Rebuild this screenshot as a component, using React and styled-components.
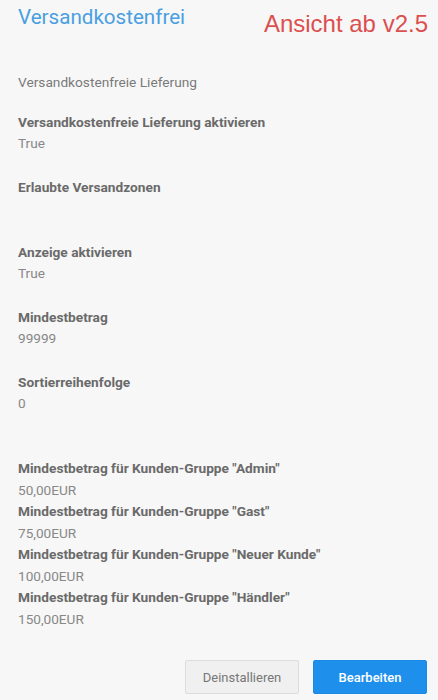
import React from "react";
import styled, { createGlobalStyle } from "styled-components";

const Global = createGlobalStyle`
  html, body { margin: 0; padding: 0; background: #f7f7f7; }
  body { font-family: Roboto, "Noto Sans", Arial, sans-serif; }
`;

const Page = styled.div`
  position: relative;
  width: 438px;
  height: 700px;
  box-sizing: border-box;
  padding: 0 0 0 18px;
  background: #f7f7f7;
  overflow: hidden;
`;

const Title = styled.h1`
  margin: 0;
  font-family: Roboto, Arial, sans-serif;
  font-weight: 400;
  font-size: 20.6px;
  line-height: 34px;
  color: #4a9fe0;
`;

const Annotation = styled.div`
  position: absolute;
  top: 9px;
  right: 10px;
  font-family: "Liberation Sans", Arial, sans-serif;
  font-size: 24px;
  line-height: 30px;
  color: #dc4f4f;
`;

const Subtitle = styled.div`
  margin-top: 38px;
  font-size: 13.7px;
  line-height: 21.5px;
  color: #7a7a7a;
`;

const Fields = styled.div`
  margin-top: 18px;
  display: flex;
  flex-direction: column;
`;

const Group = styled.div`
  display: flex;
  flex-direction: column;
  margin-bottom: ${(p) => p.$gap || 0}px;
`;

const Label = styled.div`
  font-size: 13.7px;
  font-weight: 700;
  line-height: 21.5px;
  color: #6a6a6a;
`;

const Value = styled.div`
  font-size: 13.6px;
  line-height: 21.5px;
  min-height: 21.5px;
  color: #888;
`;

const Footer = styled.div`
  position: absolute;
  left: 0;
  right: 11px;
  top: 660px;
  display: flex;
  justify-content: flex-end;
  gap: 14px;
`;

const Button = styled.button`
  width: 114px;
  height: 34px;
  box-sizing: border-box;
  border-radius: 2px;
  font-family: Roboto, Arial, sans-serif;
  font-size: 13px;
  cursor: pointer;
  border: 1px solid ${(p) => (p.$primary ? "#1a8ae6" : "#dcdcdc")};
  background: ${(p) => (p.$primary ? "#1e90ec" : "#f0f0f0")};
  color: ${(p) => (p.$primary ? "#ffffff" : "#777")};
  font-weight: ${(p) => (p.$primary ? 500 : 400)};
`;

const settings = [
  ["Versandkostenfreie Lieferung aktivieren", "True"],
  ["Erlaubte Versandzonen", ""],
  ["Anzeige aktivieren", "True"],
  ["Mindestbetrag", "99999"],
  ["Sortierreihenfolge", "0"],
];

const groups = [
  ["Admin", "50,00EUR"],
  ["Gast", "75,00EUR"],
  ["Neuer Kunde", "100,00EUR"],
  ["Händler", "150,00EUR"],
];

export default function App() {
  return (
    <>
      <Global />
      <Page>
        <Title>Versandkostenfrei</Title>
        <Annotation>Ansicht ab v2.5</Annotation>
        <Subtitle>Versandkostenfreie Lieferung</Subtitle>
        <Fields>
          {settings.map(([l, v], i) => (
            <Group key={l} $gap={i === settings.length - 1 ? 43.5 : 22}>
              <Label>{l}</Label>
              <Value>{v}</Value>
            </Group>
          ))}
          {groups.map(([g, v]) => (
            <Group key={g}>
              <Label>Mindestbetrag für Kunden-Gruppe "{g}"</Label>
              <Value>{v}</Value>
            </Group>
          ))}
        </Fields>
        <Footer>
          <Button>Deinstallieren</Button>
          <Button $primary>Bearbeiten</Button>
        </Footer>
      </Page>
    </>
  );
}
